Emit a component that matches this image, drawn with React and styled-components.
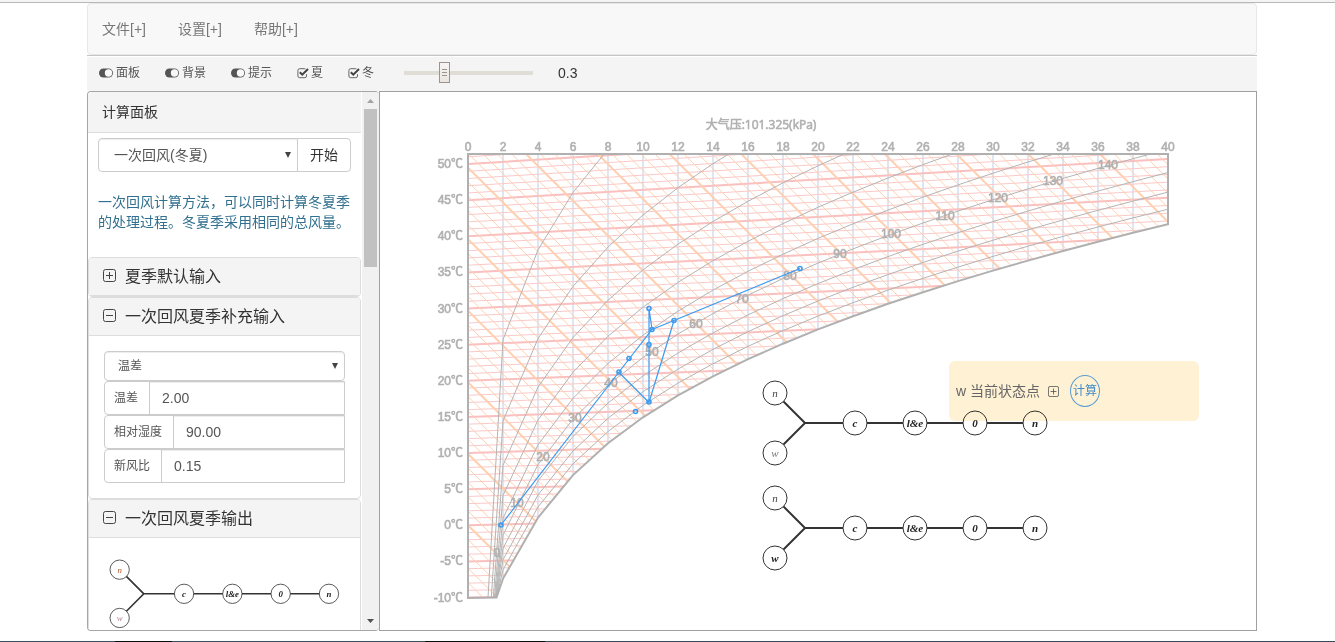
import React from "react";
import styled, { createGlobalStyle } from "styled-components";

const GlobalStyle = createGlobalStyle`
  *, *::before, *::after { box-sizing: border-box; }
  body {
    margin: 0;
    background: #fff;
    color: #333;
    font: 14px/20px "Liberation Sans", "Noto Sans CJK SC", sans-serif;
  }
  button, input, select { font: inherit; color: inherit; margin: 0; }
`;

/* ---------- page frame ---------- */

const Page = styled.div`
  display: flex;
  flex-direction: column;
  height: 100vh;
  border-top: 2px solid #f4f4f4;
`;

const TopRule = styled.div`
  flex: none;
  height: 1px;
  background: #b8b8b8;
`;

const Shell = styled.div`
  flex: 1;
  min-height: 0;
  display: flex;
  flex-direction: column;
  padding: 0 78px 10px 87px;
`;

const Taskbar = styled.div`
  flex: none;
  height: 1px;
  background: linear-gradient(90deg, #35505c 0 115px, #0c0c0c 115px 172px, #35505c 172px 425px, #0c0c0c 425px 545px, #3a4a58 545px);
`;

const NavBar = styled.nav`
  display: flex;
  flex: none;
  height: 52px;
  padding: 0 0 0 14px;
  gap: 32px;
  align-items: center;
  background: #f8f8f8;
  border: 1px solid #e7e7e7;
  border-radius: 4px;
`;

const NavLink = styled.a`
  color: #777;
  text-decoration: none;
  white-space: nowrap;
`;

const Toolbar = styled.div`
  flex: none;
  display: flex;
  align-items: center;
  height: 36px;
  padding: 0 0 2px 12px;
  background: #f4f4f4;
  border-top: 1px solid #c4c4c4;
  box-shadow: inset 0 1px 0 #fff;
  color: #555;
  font-size: 12px;
`;

const ToggleButton = styled.button`
  display: flex;
  align-items: center;
  gap: 3px;
  width: 66px;
  padding: 0;
  border: 0;
  background: none;
  line-height: 20px;
  white-space: nowrap;
`;

const CheckLabel = styled.label`
  display: flex;
  align-items: center;
  gap: 2px;
  width: 51px;
`;

const CheckBox = styled.span`
  display: grid;
  width: 12px;
  height: 12px;

  & > * { grid-area: 1 / 1; }
  input { appearance: none; width: 12px; height: 12px; }
  svg { pointer-events: none; }
`;

const Slider = styled.input`
  appearance: none;
  width: 129px;
  height: 22px;
  margin: 0 25px 0 5px;
  background: linear-gradient(#e0dcd6, #e0dcd6) center / 100% 4px no-repeat;

  &::-webkit-slider-thumb {
    appearance: none;
    width: 11px;
    height: 21px;
    border: 1px solid #9a948c;
    background:
      linear-gradient(#9a948c 0 1px, transparent 1px 3px, #9a948c 3px 4px, transparent 4px 6px, #9a948c 6px 7px) center / 5px 7px no-repeat,
      linear-gradient(#f6f4f2, #ebe5e0);
  }
`;

const SliderValue = styled.output`
  font-size: 14px;
  color: #333;
`;

const Workspace = styled.main`
  flex: 1;
  min-height: 0;
  display: flex;
`;

/* ---------- side panel ---------- */

const SidePanel = styled.aside`
  flex: none;
  display: flex;
  width: 292px;
  border: 1px solid #a6a6a6;
  border-right: 0;
  border-radius: 4px;
  overflow: hidden;
`;

const PanelScroll = styled.div`
  width: 273px;
  overflow: hidden;
`;

const ScrollTrack = styled.div`
  display: flex;
  flex-direction: column;
  align-items: center;
  justify-content: space-between;
  width: 17px;
  margin-left: 1px;
  background: #f1f1f1;
`;

const ScrollThumb = styled.div`
  width: 13px;
  height: 158px;
  background: #c1c1c1;
  margin-bottom: auto;
`;

const ScrollArrow = styled.svg`
  width: 17px;
  height: 17px;
  fill: ${(p) => p.$color};
`;

const PanelTitle = styled.h2`
  margin: 0;
  padding: 10px 14px;
  background: #f4f4f4;
  border-bottom: 1px solid #ddd;
  font-size: 14px;
  font-weight: 400;
  line-height: 20px;
`;

const MethodRow = styled.div`
  display: flex;
  margin: 5px 10px 20px;
`;

const SelectBox = styled.div`
  position: relative;
  flex: 1;

  &::after {
    content: "";
    position: absolute;
    right: 7px;
    top: ${(p) => (p.$tall ? 14 : 12)}px;
    border: 3px solid transparent;
    border-top: 6px solid #444;
    border-bottom: 0;
    pointer-events: none;
  }
`;

const Select = styled.select`
  appearance: none;
  display: block;
  width: 100%;
  height: ${(p) => (p.$tall ? 34 : 30)}px;
  padding: 0 12px 0 ${(p) => (p.$tall ? 15 : 13)}px;
  border: 1px solid #ccc;
  border-radius: ${(p) => (p.$tall ? "4px 0 0 4px" : "4px")};
  background: #fff;
  box-shadow: inset 0 1px 1px rgba(0, 0, 0, 0.075);
  color: #555;
  font-size: ${(p) => (p.$tall ? 14 : 12)}px;
`;

const StartButton = styled.button`
  width: 54px;
  height: 34px;
  margin-left: -1px;
  padding: 0;
  background: #fff;
  border: 1px solid #ccc;
  border-radius: 0 4px 4px 0;
  color: #333;
`;

const Hint = styled.p`
  margin: 0 0 25px;
  padding: 0 10px;
  color: #31708f;
  white-space: nowrap;
`;

const Section = styled.section`
  border: 1px solid #ddd;
  border-radius: 4px;
  background: #fff;
  overflow: hidden;
`;

const SectionHead = styled.h3`
  margin: 0;
  background: #f4f4f4;
  border-bottom: 1px solid #ddd;
  font-weight: 400;
  font-size: 16px;
  line-height: 20px;

  button {
    display: flex;
    align-items: center;
    gap: 9px;
    width: 100%;
    padding: 9px 14px 8px;
    border: 0;
    background: none;
    text-align: left;
  }
  svg { margin-bottom: 3px; }
`;

const Fields = styled.div`
  padding: 15px;
`;

const Field = styled.label`
  display: flex;
  height: 34px;
  border: 1px solid #ccc;
  border-radius: 4px 0 0 4px;
  color: #555;
  font-size: 12px;
  line-height: 32px;

  span {
    flex: none;
    padding: 0 11px 0 9px;
    border-right: 1px solid #ccc;
  }
  input {
    flex: 1;
    min-width: 0;
    padding: 0 12px;
    border: 0;
    background: none;
    box-shadow: inset 0 1px 1px rgba(0, 0, 0, 0.075);
    font-size: 14px;
  }
`;

const SmallFlow = styled.svg`
  display: block;
  width: 250px;
  height: 110px;
  margin: 20px 0 0 20px;
`;

/* ---------- drawing area ---------- */

const Canvas = styled.section`
  position: relative;
  flex: 1;
  min-width: 0;
  border: 1px solid #a0a0a0;
  background: #fff;
  overflow: hidden;
`;

const Drawing = styled.svg`
  display: block;
  width: 876px;
  height: 538px;

  .scale {
    font-size: 12px;
    fill: #b0b0b0;
    stroke: #b0b0b0;
    stroke-width: 0.6;
  }
  .title {
    font-family: "Open Sans", "Noto Sans CJK SC", sans-serif;
    font-size: 12px;
    fill: #b0b0b0;
    stroke: #b0b0b0;
    stroke-width: 0.6;
  }
`;

const StateCard = styled.div`
  position: absolute;
  left: 569px;
  top: 269px;
  display: flex;
  align-items: center;
  width: 250px;
  height: 60px;
  padding-left: 7px;
  border-radius: 6px;
  background: #fef1d4;
  mix-blend-mode: multiply;
  color: #666;
`;

const IconButton = styled.button`
  display: flex;
  margin: 0 11px 0 8px;
  padding: 0;
  border: 0;
  background: none;
`;

const RoundButton = styled.button`
  width: 30px;
  height: 32px;
  padding: 0;
  border: 1px solid #5a9bd3;
  border-radius: 50%;
  background: none;
  color: #428bca;
  font-size: 12px;
`;

/* ---------- icons ---------- */

const ToggleIcon = () => (
  <svg width="14" height="10" viewBox="0 0 14 10" aria-hidden="true">
    <rect x="0" y="0.5" width="14" height="9" rx="4.500" fill="#555" />
    <circle cx="9.5" cy="5" r="3.700" fill="#f8f8f8" />
  </svg>
);

const CheckIcon = () => (
  <svg width="12" height="12" viewBox="0 0 12 12" fill="none" aria-hidden="true">
    <path d="M9.5 7.2V9a1.7 1.7 0 0 1-1.7 1.7H2.6A1.7 1.7 0 0 1 .9 9V3.4a1.7 1.7 0 0 1 1.7-1.7h5.2l.6.1" stroke="#666" />
    <path d="M2.8 5.2 5.3 7.7 11 2" stroke="#444" strokeWidth="2" />
  </svg>
);

const BoxIcon = ({ size = 13, plus = false, color = "#444" }) => (
  <svg width={size} height={size} viewBox="0 0 13 13" fill="none" stroke={color} aria-hidden="true">
    <rect x="0.5" y="0.5" width="12" height="12" rx="2" />
    <path d={plus ? "M3 6.5h7M6.5 3v7" : "M3 6.5h7"} />
  </svg>
);

/* ---------- psychrometric chart ---------- */

const TOP = 62;
const px = (d) => 88 + 17.5 * d;
const py = (t, d) => 433.3 - 7.225 * t * (1 + 0.00182 * d) - 0.44 * d;

// Saturation vapour pressure in Pa, over ice below zero and over water above.
const pws = (t) =>
  t < 0
    ? 611.2 * Math.exp((22.46 * t) / (272.62 + t))
    : 611.2 * Math.exp((17.62 * t) / (243.12 + t));

// Temperature at which air with moisture d (g/kg) has relative humidity phi.
const tempAt = (d, phi) => {
  const target = (101325 * d) / (622 + d) / phi;
  let lo = -40;
  let hi = 120;
  for (let i = 0; i < 40; i++) {
    const mid = (lo + hi) / 2;
    if (pws(mid) < target) lo = mid;
    else hi = mid;
  }
  return lo;
};

const range = (from, to, step) => {
  const out = [];
  for (let v = from; v <= to; v += step) out.push(v);
  return out;
};
const join = (pts) => pts.map((p) => p.map((n) => n.toFixed(1)).join(",")).join(" ");

const STARTS = [108, 111.3, 113.3, 114.5, 115.3, 115.8, 116.1, 116.3, 116.5];
const moist = range(2, 40, 2);
const humidity = (phi, start) => [
  [start, 505.5],
  ...moist.map((d) => [px(d), py(tempAt(d, phi), d)]),
];
const saturation = humidity(1, 116.5);
const outline = join([[88, TOP], [788, TOP], ...[...saturation].reverse(), [88, 506]]);

const ENTHALPY = [
  [117, 461], [137, 411], [163, 365], [195, 326], [231, 291], [272, 260], [316, 232], [362, 207],
  [410, 184], [460, 162], [511, 142], [565, 124], [618, 106], [673, 89], [728, 73],
];

const POINTS = [
  [420, 176.5], [294, 228.5], [272, 237.5], [269, 216.5], [269, 252.5],
  [269, 310], [239, 280], [249, 266.5], [255.5, 319.5], [121, 433],
];

function Chart() {
  return (
    <g>
      <clipPath id="chart-area">
        <polygon points={outline} />
      </clipPath>
      <text className="title" x="381" y="37" textAnchor="middle">大气压:101.325(kPa)</text>
      <g clipPath="url(#chart-area)" fill="none">
        {moist.map((d) => (
          <path key={d} d={`M${px(d)} ${TOP}V510`} stroke="#dce7f3" strokeWidth="2" />
        ))}
        {range(-10, 51, 1).map((t) => (
          <path
            key={t}
            d={`M${px(0)} ${py(t, 0)}L${px(40)} ${py(t, 40)}`}
            stroke={t % 5 === 0 ? "#fabfbf" : "#fbc8c8"}
            strokeWidth={t % 5 === 0 ? 2 : 1}
          />
        ))}
        {range(-20, 160, 2).map((h) => (
          <path
            key={h}
            d={`M${px(0)} ${py(h / 1.01, 0)}L${px(40)} ${py(h / 1.01, 0) + 698}`}
            stroke={h % 10 === 0 ? "#ffcfb0" : "#ffd0b0"}
            strokeWidth={h % 10 === 0 ? 2 : 1}
          />
        ))}
        {STARTS.map((s, i) => (
          <polyline key={s} points={join(humidity((i + 1) / 10, s))} stroke="#b4b4b4" />
        ))}
      </g>
      <polygon points={outline} fill="none" stroke="#b0b0b0" strokeWidth="2" />
      {range(0, 40, 2).map((d) => (
        <text key={d} className="scale" x={px(d)} y="59" textAnchor="middle">{d}</text>
      ))}
      {range(-10, 50, 5).map((t) => (
        <text key={t} className="scale" x="83" y={py(t, 0) + 4} textAnchor="end">{t}℃</text>
      ))}
      {ENTHALPY.map(([x, y], i) => (
        <text key={i} className="scale" x={x} y={y + 4} textAnchor="middle">{i * 10}</text>
      ))}
      <g fill="none" stroke="#3c9bf0" strokeWidth="1.2">
        <path d="M420 176.5 294 228.5 272 237.5 239 280 121 433" />
        <path d="M239 280.5 269 310.5 294 228.5" />
        <path d="M272 237.5 269 216.5V310" />
        {POINTS.map(([x, y]) => (
          <circle key={`${x}-${y}`} cx={x} cy={y} r="2" strokeWidth="1.6" />
        ))}
      </g>
    </g>
  );
}

function Flow({ x, y, scale = 1, boldW = false, nColor = "#444", wColor = "#777" }) {
  const nodes = [
    [12, 12, "n", nColor, 400],
    [12, 72, "w", boldW ? "#222" : wColor, boldW ? 700 : 400],
    [92, 42, "c", "#222", 700],
    [152, 42, "l&e", "#222", 700],
    [212, 42, "0", "#222", 700],
    [272, 42, "n", "#222", 700],
  ];
  return (
    <g transform={`translate(${x} ${y}) scale(${scale})`}>
      <path d="M12 12 42 42 12 72M42 42H272" fill="none" stroke="#333" strokeWidth="2" />
      {nodes.map(([cx, cy, label, color, weight], i) => (
        <g key={i}>
          <circle cx={cx} cy={cy} r="12" fill="#fff" stroke="#333" />
          <text
            x={cx}
            y={cy + 4}
            textAnchor="middle"
            fontFamily='"Liberation Serif", serif'
            fontSize="11"
            fontStyle="italic"
            fontWeight={weight}
            fill={color}
          >
            {label}
          </text>
        </g>
      ))}
    </g>
  );
}

const Heading = ({ plus, children }) => (
  <SectionHead>
    <button type="button" aria-expanded={!plus}>
      <BoxIcon plus={plus} />
      {children}
    </button>
  </SectionHead>
);

const FIELDS = [["温差", "2.00"], ["相对湿度", "90.00"], ["新风比", "0.15"]];

export default function App() {
  const [ratio, setRatio] = React.useState(0.3);
  return (
    <Page>
      <GlobalStyle />
      <TopRule />
      <Shell>
        <NavBar>
          {["文件[+]", "设置[+]", "帮助[+]"].map((n) => (
            <NavLink key={n} href="#">{n}</NavLink>
          ))}
        </NavBar>
        <Toolbar>
          {["面板", "背景", "提示"].map((n) => (
            <ToggleButton key={n} type="button" aria-pressed="true">
              <ToggleIcon />
              {n}
            </ToggleButton>
          ))}
          {["夏", "冬"].map((n) => (
            <CheckLabel key={n}>
              <CheckBox>
                <input type="checkbox" defaultChecked />
                <CheckIcon />
              </CheckBox>
              {n}
            </CheckLabel>
          ))}
          <Slider
            type="range"
            min="0"
            max="1"
            step="0.1"
            aria-label="背景透明度"
            value={ratio}
            onChange={(e) => setRatio(e.target.value)}
          />
          <SliderValue>{ratio}</SliderValue>
        </Toolbar>
        <Workspace>
          <SidePanel>
            <PanelScroll>
              <PanelTitle>计算面板</PanelTitle>
              <MethodRow>
                <SelectBox $tall>
                  <Select $tall aria-label="计算方法">
                    <option>一次回风(冬夏)</option>
                  </Select>
                </SelectBox>
                <StartButton type="button">开始</StartButton>
              </MethodRow>
              <Hint>
                一次回风计算方法，可以同时计算冬夏季
                <br />
                的处理过程。冬夏季采用相同的总风量。
              </Hint>
              <Section>
                <Heading plus>夏季默认输入</Heading>
              </Section>
              <Section>
                <Heading>一次回风夏季补充输入</Heading>
                <Fields>
                  <SelectBox>
                    <Select aria-label="送风方式">
                      <option>温差</option>
                    </Select>
                  </SelectBox>
                  {FIELDS.map(([label, value]) => (
                    <Field key={label}>
                      <span>{label}</span>
                      <input type="text" defaultValue={value} />
                    </Field>
                  ))}
                </Fields>
              </Section>
              <Section>
                <Heading>一次回风夏季输出</Heading>
                <SmallFlow>
                  <Flow x={1} y={2} scale={0.805} nColor="#b5562a" wColor="#b08a94" />
                </SmallFlow>
              </Section>
            </PanelScroll>
            <ScrollTrack>
              <ScrollArrow $color="#a3a3a3" viewBox="0 0 17 17"><path d="M5 11h7L8.500 7z" /></ScrollArrow>
              <ScrollThumb />
              <ScrollArrow $color="#505050" viewBox="0 0 17 17"><path d="M5 6h7L8.500 10z" /></ScrollArrow>
            </ScrollTrack>
          </SidePanel>
          <Canvas>
            <Drawing>
              <Chart />
              <Flow x={383} y={289} />
              <Flow x={383} y={394} boldW />
            </Drawing>
            <StateCard>
              w 当前状态点
              <IconButton type="button" aria-label="展开">
                <BoxIcon plus size={11} color="#555" />
              </IconButton>
              <RoundButton type="button">计算</RoundButton>
            </StateCard>
          </Canvas>
        </Workspace>
      </Shell>
      <Taskbar />
    </Page>
  );
}
